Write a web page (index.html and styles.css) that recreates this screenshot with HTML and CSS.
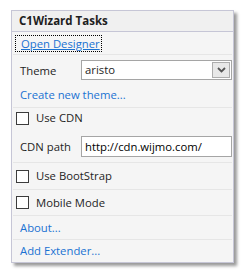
FILE: index.html
```html
<!DOCTYPE html>
<html>
<head>
<meta charset="utf-8">
<link rel="stylesheet" href="styles.css">
</head>
<body>
<div class="panel">
  <div class="header">C1Wizard Tasks</div>
  <div class="row r-open"><a class="link focus">Open Designer</a></div>
  <div class="group g-theme">
    <div class="field">
      <span class="label">Theme</span>
      <div class="select"><span class="sel-text">aristo</span><span class="sel-btn"><svg width="9" height="6" viewBox="0 0 9 6"><path d="M1 1 L4.5 4.5 L8 1" fill="none" stroke="#555" stroke-width="1.8"/></svg></span></div>
    </div>
    <a class="link l-create">Create new theme...</a>
  </div>
  <div class="group g-cdn">
    <label class="check c-cdn"><span class="box"></span>Use CDN</label>
    <div class="field f-path">
      <span class="label">CDN path</span>
      <div class="input">http://cdn.wijmo.com/</div>
    </div>
  </div>
  <div class="row r-boot"><label class="check"><span class="box"></span>Use BootStrap</label></div>
  <div class="row r-mobile"><label class="check"><span class="box"></span>Mobile Mode</label></div>
  <div class="row r-about"><a class="link">About...</a></div>
  <div class="row r-add last"><a class="link">Add Extender...</a></div>
</div>
</body>
</html>
```

FILE: styles.css
```css
* { box-sizing: border-box; }
html, body { margin: 0; padding: 0; background: #ffffff; }
body {
  font-family: "Open Sans", "Noto Sans", sans-serif;
  font-size: 11.3px;
  color: #1e1e1e;
  width: 243px;
  height: 274px;
  overflow: hidden;
}
.panel {
  margin: 10px 0 0 11px;
  width: 223px;
  height: 253px;
  border: 1px solid #c6c6d6;
  background: #f5f5f5;
  box-shadow: 3px 3px 3px rgba(0, 0, 0, 0.4);
  display: flex;
  flex-direction: column;
}
.header {
  height: 21px;
  background: #f0f0f0;
  border-bottom: 1px solid #c6c6d6;
  font-weight: 700;
  font-size: 11.5px;
  padding-left: 7px;
  line-height: 20px;
  color: #1e1e1e;
}
.row, .group {
  margin: 0 1px;
  border-bottom: 1px solid #e6e6e6;
}
.row {
  display: flex;
  align-items: center;
  padding-left: 7px;
}
.last { border-bottom: none; }
.r-open { height: 23px; padding-left: 2px; }
.r-boot { height: 27px; padding-left: 3px; }
.r-mobile { height: 26px; padding-left: 3px; }
.r-about { height: 24px; }
.r-add { height: 22px; }
.link {
  color: #1a72d2;
  line-height: 16px;
}
.focus {
  outline: 1px dotted #000;
  padding: 0 1px 0 5px;
  margin-left: 1px;
  line-height: 15px;
  text-decoration: underline;
}
.group {
  display: flex;
  flex-direction: column;
  padding-left: 7px;
}
.g-theme { height: 53px; padding-top: 5px; }
.field {
  display: flex;
  align-items: center;
}
.label { width: 61px; }
.select {
  width: 151px;
  height: 20px;
  background: #fff;
  border: 1px solid #a5a5a5;
  display: flex;
  align-items: center;
  justify-content: space-between;
  padding: 1px 1px 1px 3px;
}
.sel-text { line-height: 16px; }
.sel-btn {
  width: 18px;
  height: 16px;
  background: #e8e8e8;
  border: 1px solid #adadad;
  display: flex;
  align-items: center;
  justify-content: center;
}
.l-create { margin-top: 7px; }
.g-cdn { height: 55px; padding-top: 2px; padding-left: 3px; }
.check {
  display: flex;
  align-items: center;
  line-height: 16px;
}
.box {
  width: 13px;
  height: 13px;
  background: #fff;
  border: 1px solid #3c3c3c;
  margin-right: 7px;
}
.f-path { margin-top: 10px; padding-left: 4px; }
.input {
  width: 151px;
  height: 21px;
  background: #fff;
  border: 1px solid #a5a5a5;
  padding-left: 3px;
  line-height: 19px;
  color: #000;
}
```
